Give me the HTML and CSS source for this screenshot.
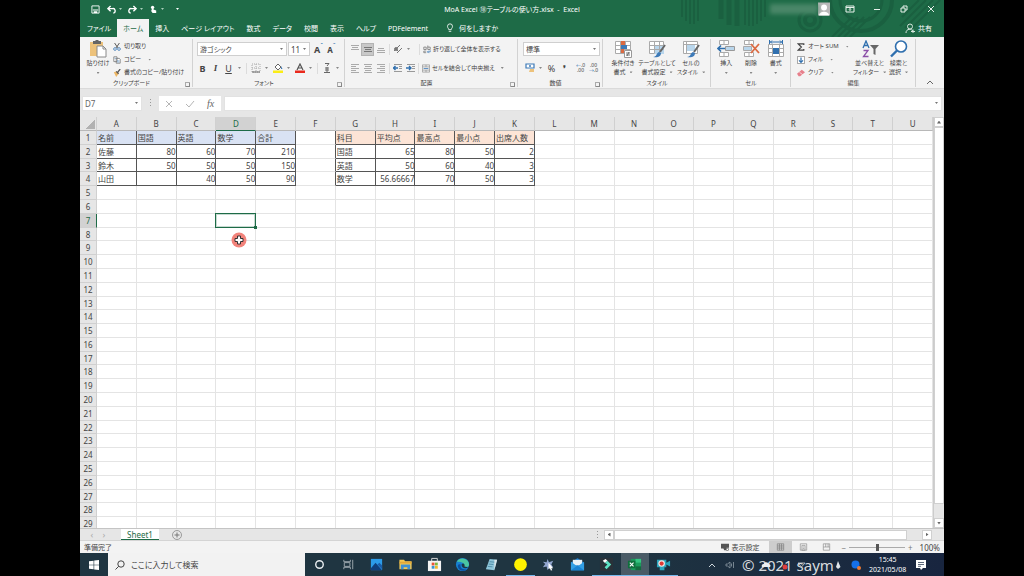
FILE: index.html
```html
<!DOCTYPE html>
<html lang="ja">
<head>
<meta charset="utf-8">
<title>MoA Excel ⑱テーブルの使い方.xlsx - Excel</title>
<link rel="stylesheet" href="styles.css">
</head>
<body>
<div class="window">
  <header class="top">
    <svg class="pattern" viewBox="0 0 300 37" preserveAspectRatio="xMaxYMin slice" fill="none" stroke="#1a6040" stroke-width="2" aria-hidden="true">
      <path d="M38 0V17M42 0V21M46 0V24M50 0V24M54 0V21M101 0V25M105 0V26M109 0V26M113 0V24M117 0V21M121 0V17"/>
      <path d="M77 0V19M85 0V25M93 0V26" stroke-width="5"/>
      <circle cx="166" cy="20" r="5" stroke-width="4"/><circle cx="166" cy="20" r="11" stroke-width="3"/>
      <path d="M188 37L208 17M194 37L214 17M200 37L220 17M206 37L226 17"/>
      <path d="M186 0a31 31 0 0 0 62 0" stroke-width="4"/><path d="M196 0a21 21 0 0 0 42 0" stroke-width="3"/>
      <path d="M256 26L282 0M261 28L289 0M266 30L296 0M258 17L275 0"/>
    </svg>
    <div class="titlebar">
      <div class="quick">
        <button aria-label="上書き保存"><svg viewBox="0 0 10 10"><path d="M1 1h8v8H1z" fill="none" stroke="#fff"/><path d="M2 5h6v1H2zM3 7h4v2H3z" fill="#fff"/></svg></button>
        <button aria-label="元に戻す"><svg viewBox="0 0 10 10"><path d="M4 1L1 4l3 3M1.500 4H6a2.500 2.500 0 0 1 1 5" fill="none" stroke="#fff" stroke-width="1.500"/></svg></button><i class="chev light"></i>
        <button aria-label="やり直し"><svg viewBox="0 0 10 10"><path d="M6 1l3 3-3 3M8.500 4H4a2.500 2.500 0 0 0-1 5" fill="none" stroke="#fff" stroke-width="1.500"/></svg></button><i class="chev light"></i>
        <button aria-label="タッチ/マウス モード"><svg viewBox="0 0 10 10"><circle cx="4" cy="2.500" r="1.800" fill="#fff"/><path d="M3 3h2v2l3 1v3H4L2 6h1z" fill="#fff"/></svg></button><i class="chev light"></i>
        <i class="chev light more"></i>
      </div>
      <div class="title">MoA Excel ⑱テーブルの使い方.xlsx &nbsp;-&nbsp; Excel</div>
      <div class="caption">
        <span class="account"></span>
        <svg class="avatar" viewBox="0 0 12 13"><path d="M0 0h12v13H0z" fill="#b9b9b9"/><circle cx="6" cy="5" r="3" fill="#fff"/><path d="M1 13c0-5 10-5 10 0z" fill="#fff"/></svg>
        <button aria-label="リボンの表示オプション"><svg viewBox="0 0 10 10"><path d="M1 2h8v6H1zM1 3.500h8M5 7V4.500M4 5.500l1-1 1 1" fill="none" stroke="#e7f1eb"/></svg></button>
        <button aria-label="最小化"><svg viewBox="0 0 10 10"><path d="M2 5.500h6" stroke="#e7f1eb"/></svg></button>
        <button aria-label="元に戻す (縮小)"><svg viewBox="0 0 10 10"><path d="M2 4h4v4H2zM4 4V2h4v4H6" fill="none" stroke="#e7f1eb"/></svg></button>
        <button aria-label="閉じる"><svg viewBox="0 0 10 10"><path d="M2 2l6 6M8 2L2 8" stroke="#e7f1eb"/></svg></button>
      </div>
    </div>
    <nav class="tabs">
      <button>ファイル</button><button class="active">ホーム</button><button>挿入</button><button>ページ レイアウト</button><button>数式</button><button>データ</button><button>校閲</button><button>表示</button><button>ヘルプ</button><button>PDFelement</button>
      <button class="tell"><svg viewBox="0 0 10 12"><path d="M3.500 8C3.500 6.500 2 6 2 4a3 3 0 0 1 6 0c0 2-1.500 2.500-1.500 4zM3.500 10h3" fill="none" stroke="#fff"/></svg>何をしますか</button>
      <button class="share"><svg viewBox="0 0 10 10"><circle cx="5" cy="3.500" r="2.500" fill="none" stroke="#d7e8de"/><path d="M1 10c0-5 6-4 7-2M6 8.500h4M8 6.500v4" fill="none" stroke="#d7e8de"/></svg>共有</button>
    </nav>
  </header>

  <section class="ribbon">
    <div class="group clipboard">
      <div class="body">
        <button class="big"><svg viewBox="0 0 18 18"><path d="M1 2h13v14H1z" fill="#edc27b"/><path d="M4 1h2l1-1h2l1 1h2v3H4z" fill="#666"/><path d="M8 6h6l3 3v8H8z" fill="#fff" stroke="#8a8a8a"/><path d="M14 6v3h3" fill="none" stroke="#8a8a8a"/></svg><span>貼り付け</span><i class="chev"></i></button>
        <div class="list">
          <button><svg viewBox="0 0 10 10"><path d="M2 0l4 6M8 0L4 6" stroke="#555" stroke-width="1.200"/><circle cx="2.500" cy="7.500" r="1.700" fill="none" stroke="#3d7ab8"/><circle cx="7.500" cy="7.500" r="1.700" fill="none" stroke="#3d7ab8"/></svg>切り取り</button>
          <button><svg viewBox="0 0 10 10"><path d="M1 1h4v6H1zM4 3h4l1 1v5H4z" fill="#fff" stroke="#777"/><path d="M5 6h3M5 7.500h3M2 3h2" stroke="#4a86c0" stroke-width=".7"/></svg>コピー<i class="chev"></i></button>
          <button><svg viewBox="0 0 10 10"><path d="M1 4l3-1 3 3-3 4z" fill="#edb765"/><path d="M4 3l3 3M6 4l3-4" stroke="#555" stroke-width="1.600"/></svg>書式のコピー/貼り付け</button>
        </div>
      </div>
      <div class="label">クリップボード</div><i class="launch"></i>
    </div>
    <div class="group font">
      <div class="rows">
        <div class="row">
          <label class="pick wide"><select aria-label="フォント"><option>游ゴシック</option></select></label>
          <label class="pick size"><select aria-label="フォント サイズ"><option>11</option></select></label>
          <button class="tool"><b>A</b><sup>ˆ</sup></button><button class="tool small"><b>A</b><sup>ˇ</sup></button>
        </div>
        <div class="row">
          <button class="tool"><b>B</b></button><button class="tool"><em>I</em></button><button class="tool"><u>U</u></button><i class="chev"></i>
          <i class="rule"></i>
          <button class="tool" aria-label="罫線"><svg viewBox="0 0 10 10"><path d="M1 1h8v8H1zM5 1v8M1 5h8" fill="none" stroke="#aaa" stroke-dasharray="1 1"/><path d="M1 9h8" stroke="#666"/></svg></button><i class="chev"></i>
          <button class="tool" aria-label="塗りつぶしの色"><svg viewBox="0 0 10 10"><path d="M2 4l3-3 3 3-3 3z" fill="#fff" stroke="#666"/><path d="M8 3l1.500 3H8z" fill="#3d7ab8"/><path d="M0 7.500h10V10H0z" fill="#fbed16"/></svg></button><i class="chev"></i>
          <button class="tool" aria-label="フォントの色"><svg viewBox="0 0 10 10"><path d="M2 7l3-6 3 6M3 5h4" fill="none" stroke="#555" stroke-width="1.200"/><path d="M0 7.500h10V10H0z" fill="#e9291c"/></svg></button><i class="chev"></i>
          <i class="rule"></i>
          <button class="tool" aria-label="ふりがな"><svg viewBox="0 0 10 10"><path d="M3 .5h4L5 3M3 5h4M5 4v5M3 7h4M2 9.500h6" fill="none" stroke="#666"/></svg></button><i class="chev"></i>
        </div>
      </div>
      <div class="label">フォント</div><i class="launch"></i>
    </div>
    <div class="group align">
      <div class="rows">
        <div class="row">
          <button class="tool" aria-label="上揃え"><svg viewBox="0 0 10 10"><path d="M1 1.500h8M2 3.500h6M1 5.500h8" stroke="#aaa"/></svg></button>
          <button class="tool on" aria-label="上下中央揃え"><svg viewBox="0 0 10 10"><path d="M1 3.500h8M2 5.500h6M1 7.500h8" stroke="#777"/></svg></button>
          <button class="tool" aria-label="下揃え"><svg viewBox="0 0 10 10"><path d="M2 4.500h6M1 6.500h8M1 8.500h8" stroke="#aaa"/></svg></button>
          <i class="rule"></i>
          <button class="tool" aria-label="方向"><svg viewBox="0 0 10 10"><path d="M1 7l6-6M4 9l5-5M2 4l3 3" stroke="#777"/><circle cx="3" cy="5" r="1.500" fill="none" stroke="#777"/></svg></button><i class="chev"></i>
          <i class="rule push"></i>
          <button class="text"><svg viewBox="0 0 10 10"><path d="M1 2h3v3H1zM6 0v5h3V2H6M4 7H1v2h3" fill="none" stroke="#777"/><path d="M9 6v2H6M7 6.500L5.500 8 7 9.500" fill="none" stroke="#3d7ab8"/></svg>折り返して全体を表示する</button>
        </div>
        <div class="row">
          <button class="tool" aria-label="左揃え"><svg viewBox="0 0 10 10"><path d="M1 1.500h8M1 3.500h5M1 5.500h8M1 7.500h5M1 9.500h8" stroke="#aaa"/></svg></button>
          <button class="tool" aria-label="中央揃え"><svg viewBox="0 0 10 10"><path d="M1 1.500h8M2 3.500h6M1 5.500h8M2 7.500h6M1 9.500h8" stroke="#aaa"/></svg></button>
          <button class="tool" aria-label="右揃え"><svg viewBox="0 0 10 10"><path d="M1 1.500h8M4 3.500h5M1 5.500h8M4 7.500h5M1 9.500h8" stroke="#aaa"/></svg></button>
          <i class="rule"></i>
          <button class="tool" aria-label="インデントを減らす"><svg viewBox="0 0 10 10"><path d="M1 1.500h8M6 3.500h3M6 5.500h3M1 8.500h8" stroke="#999"/><path d="M0 5h5M2.500 3L.5 5l2 2" fill="none" stroke="#2f6fae" stroke-width="1.400"/></svg></button>
          <button class="tool" aria-label="インデントを増やす"><svg viewBox="0 0 10 10"><path d="M1 1.500h8M6 3.500h3M6 5.500h3M1 8.500h8" stroke="#999"/><path d="M0 5h5M3 3l2 2-2 2" fill="none" stroke="#2f6fae" stroke-width="1.400"/></svg></button>
          <i class="rule tight"></i>
          <button class="text"><svg viewBox="0 0 10 10"><path d="M.5 .5h9v9h-9zM.5 3h9M.5 7h9M5 .5V3M5 7v2.500" fill="none" stroke="#888" stroke-width=".8"/><path d="M2 5h6" stroke="#3d7ab8"/></svg>セルを結合して中央揃え</button><i class="chev end"></i>
        </div>
      </div>
      <div class="label">配置</div><i class="launch"></i>
    </div>
    <div class="group number">
      <div class="rows">
        <div class="row"><label class="pick wide"><select aria-label="表示形式"><option>標準</option></select></label></div>
        <div class="row">
          <button class="tool" aria-label="通貨"><svg viewBox="0 0 10 10"><path d="M1 1h8v4H1z" fill="#fff" stroke="#3d7ab8" stroke-width="1.200"/><circle cx="5" cy="3" r="1" fill="#3d7ab8"/><path d="M5 6h4v3H4z" fill="#edc27b"/></svg></button><i class="chev"></i>
          <button class="tool">%</button><button class="tool"><b>❜</b></button>
          <i class="rule"></i>
          <button class="tool digits" aria-label="小数点以下の表示桁数を増やす"><span><s>←</s>.0</span><span>.00</span></button><button class="tool digits" aria-label="小数点以下の表示桁数を減らす"><span>.00</span><span><s>→</s>.0</span></button>
        </div>
      </div>
      <div class="label">数値</div><i class="launch"></i>
    </div>
    <div class="group styles">
      <div class="body">
        <button class="big"><svg viewBox="0 0 18 18"><path d="M1.500 1.500h15v12h-15zM1.500 5.500h15M1.500 9.500h15M6.500 1.500v12M11.500 1.500v12" fill="#fff" stroke="#aaa"/><path d="M7 1h4v4H7zM7 9h3v4H7z" fill="#dc6a41"/><path d="M7 5h6v4H7z" fill="#3d7ab8"/><path d="M10.500 10.500h7v7h-7z" fill="#fff" stroke="#999"/><path d="M12 13h4M12 15h4M15 12l-2 4" stroke="#555" stroke-width=".8"/></svg><span>条件付き<br>書式<i class="chev"></i></span></button>
        <button class="big"><svg viewBox="0 0 18 18"><path d="M1.500 1.500h14v12h-14z" fill="#fff" stroke="#aaa"/><path d="M6 5h10v9H6z" fill="#b9d6ec"/><path d="M1.500 5.500h14M1.500 9.500h14M6.500 1.500v12M11.500 1.500v12" stroke="#aaa"/><path d="M17 5l-5 7" stroke="#666" stroke-width="2"/><path d="M5 17c4 0 3-4 6-5l2 1c0 4-4 5-8 4z" fill="#3d7ab8"/></svg><span>テーブルとして<br>書式設定<i class="chev"></i></span></button>
        <button class="big"><svg viewBox="0 0 18 18"><path d="M1.500 1.500h14v12h-14z" fill="#fff" stroke="#aaa"/><path d="M4 4h9v7H4z" fill="#b9d6ec"/><path d="M1.500 4.500h14M4.500 1.500v12" stroke="#aaa"/><path d="M17 5l-5 7" stroke="#666" stroke-width="2"/><path d="M5 17c4 0 3-4 6-5l2 1c0 4-4 5-8 4z" fill="#3d7ab8"/></svg><span>セルの<br>スタイル<i class="chev"></i></span></button>
      </div>
      <div class="label">スタイル</div>
    </div>
    <div class="group cells">
      <div class="body">
        <button class="big"><svg viewBox="0 0 18 18"><path d="M2.500 .5h9v4h-9zM7 .5v4M2.500 12.500h9v4h-9zM7 12.500v4" fill="#fff" stroke="#aaa"/><path d="M8.500 6.500h9v4h-9z" fill="#b9d6ec" stroke="#999"/><path d="M1 8.500h7M4 5.500l-3 3 3 3" fill="none" stroke="#2f6fae" stroke-width="1.600"/></svg><span>挿入</span><i class="chev"></i></button>
        <button class="big"><svg viewBox="0 0 18 18"><path d="M2.500 .5h9v4h-9zM7 .5v4M2.500 12.500h9v4h-9zM7 12.500v4" fill="#fff" stroke="#aaa"/><path d="M1.500 6.500h8v4h-8z" fill="#b9d6ec" stroke="#aaa"/><path d="M9 4l8 9M17 4l-8 9" stroke="#dc6a41" stroke-width="1.800"/></svg><span>削除</span><i class="chev"></i></button>
        <button class="big"><svg viewBox="0 0 18 18"><path d="M1.500 4.500h15v12h-15zM1.500 8.500h15M1.500 12.500h15M5.500 4.500v12M12.500 4.500v12" fill="#fff" stroke="#aaa"/><path d="M6 8h6v6H6z" fill="#2f6fae"/><path d="M2.500 0v4M15.500 0v4M3 2h12M5 .5L3.500 2 5 3.500M13 .5L14.500 2 13 3.500" fill="none" stroke="#2f6fae"/></svg><span>書式</span><i class="chev"></i></button>
      </div>
      <div class="label">セル</div>
    </div>
    <div class="group edit">
      <div class="body">
        <div class="list">
          <button><svg viewBox="0 0 10 10"><path d="M8.500 2.500V1h-7l4 4-4 4h7V7.500" fill="none" stroke="#444" stroke-width="1.500"/></svg>オート SUM<i class="chev"></i></button>
          <button><svg viewBox="0 0 10 10"><path d="M.5 .5h9v9h-9z" fill="#fff" stroke="#888"/><path d="M5 2v6M2.500 5.500L5 8l2.500-2.500" fill="none" stroke="#2f6fae" stroke-width="1.500"/></svg>フィル<i class="chev"></i></button>
          <button><svg viewBox="0 0 10 10"><path d="M0 6l6-5 4 3-6 5H2z" fill="#e77f8b"/><path d="M3 4l4 3" stroke="#fff" stroke-width=".8"/></svg>クリア<i class="chev"></i></button>
        </div>
        <button class="big"><svg viewBox="0 0 18 18"><path d="M2 8l3-7 3 7M3 5.500h4" fill="none" stroke="#2f6fae" stroke-width="1.300"/><path d="M2.500 10.500H7l-4.500 6H7.500" fill="none" stroke="#8c50a8" stroke-width="1.300"/><path d="M9 5h9l-3.500 4v6l-2-1V9z" fill="#666"/></svg><span>並べ替えと<br>フィルター<i class="chev"></i></span></button>
        <button class="big"><svg viewBox="0 0 18 18"><circle cx="11" cy="6.500" r="5.500" fill="#fff" stroke="#2f6fae" stroke-width="1.600"/><path d="M7 10.500L1 16.500" stroke="#2f6fae" stroke-width="2.400"/></svg><span>検索と<br>選択<i class="chev"></i></span></button>
      </div>
      <div class="label">編集</div>
    </div>
    <div class="group collapse"><button aria-label="リボンを折りたたむ"><svg viewBox="0 0 10 10"><path d="M2 7l3-3 3 3" fill="none" stroke="#666"/></svg></button></div>
  </section>

  <section class="formula">
    <label class="pick name"><input aria-label="名前ボックス" value="D7"></label>
    <i class="dots"></i>
    <div class="fx"><button aria-label="キャンセル"><svg viewBox="0 0 10 10"><path d="M2 2l6 6M8 2L2 8" stroke="#b5b5b5"/></svg></button><button aria-label="入力"><svg viewBox="0 0 10 10"><path d="M1 5l3 3 5-6" fill="none" stroke="#b5b5b5"/></svg></button><button class="fn"><em>fx</em></button></div>
    <label class="pick bar"><input aria-label="数式バー"></label>
  </section>

  <main class="sheet">
    <div class="view"><table class="grid" id="grid"></table></div>
    <div class="vscroll"><button aria-label="上へ"><i class="arrow up"></i></button><i class="thumb"></i><i class="rest"></i><button aria-label="下へ"><i class="arrow down"></i></button></div>
    <svg class="cursor" viewBox="0 0 16 16" aria-hidden="true"><circle cx="8" cy="8" r="7.500" fill="#f2837b"/><path d="M6.500 4h3v2.500H12v3H9.500V12h-3V9.500H4v-3h2.500z" fill="#fff" stroke="#333"/></svg>
  </main>

  <div class="sheets">
    <div class="names"><button class="nav" aria-label="前のシート">‹</button><button class="nav" aria-label="次のシート">›</button><button class="current">Sheet1</button><button class="add" aria-label="新しいシート"><svg viewBox="0 0 10 10"><circle cx="5" cy="5" r="4.500" fill="none" stroke="#888" stroke-width=".8"/><path d="M5 2.500v5M2.500 5h5" stroke="#777"/></svg></button></div>
    <i class="dots"></i>
    <div class="hscroll"><button aria-label="左へ"><i class="arrow left"></i></button><i class="thumb"></i><i class="rest"></i><button aria-label="右へ"><i class="arrow right"></i></button></div>
  </div>

  <footer class="status">
    <span>準備完了</span>
    <div class="tools">
      <button class="display"><svg viewBox="0 0 10 10"><path d="M0 1h10v5H7v3H4L3 7H0z" fill="#555"/><circle cx="8" cy="8" r="1.500" fill="#fff" stroke="#555"/></svg>表示設定</button>
      <button class="mode on" aria-label="標準"><svg viewBox="0 0 10 10"><path d="M1 1h8v8H1zM1 3.700h8M1 6.300h8M3.700 1v8M6.300 1v8" fill="none" stroke="#777" stroke-width=".8"/></svg></button>
      <button class="mode" aria-label="ページ レイアウト"><svg viewBox="0 0 10 10"><path d="M1 1h8v8H1zM3 3h4v6H3zM4 5h2M4 7h2" fill="none" stroke="#888" stroke-width=".8"/></svg></button>
      <button class="mode" aria-label="改ページ プレビュー"><svg viewBox="0 0 10 10"><path d="M1 1h8v8H1zM1 5h8M4 1v4M7 1v4" fill="none" stroke="#888" stroke-width=".8"/></svg></button>
      <span class="sign">−</span><input class="zoom" type="range" min="10" max="190" value="100" aria-label="ズーム"><span class="sign">+</span><span class="percent">100%</span>
    </div>
  </footer>

  <div class="taskbar">
    <button class="start" aria-label="スタート"><svg viewBox="0 0 10 10"><path d="M0 1.300L4.600 .7v4H0zM5.200 .6L10 0v4.700H5.200zM0 5.300h4.600v4L0 8.700zM5.200 5.300H10V10l-4.800-.6z" fill="#fff"/></svg></button>
    <label class="search"><svg viewBox="0 0 10 10"><circle cx="6" cy="4" r="3.200" fill="none" stroke="#444"/><path d="M3.700 6.300L.5 9.500" stroke="#444"/></svg><input placeholder="ここに入力して検索" aria-label="検索"></label>
    <div class="apps">
      <button aria-label="Cortana"><svg viewBox="0 0 16 16"><circle cx="8" cy="8" r="4" fill="none" stroke="#e8edf0" stroke-width="1.500"/></svg></button>
      <button aria-label="タスク ビュー"><svg viewBox="0 0 16 16"><path d="M3 3v2h7V3M3 13v-2h7v2M3.500 6h6v4h-6zM12.500 3v10" fill="none" stroke="#9faab0"/></svg></button>
      <button aria-label="フォト"><svg viewBox="0 0 16 16"><path d="M2 2h12v12H2z" fill="#2c9be8"/><path d="M2 12l5-6 7 8H2z" fill="#103f7c"/><path d="M9 8l2-2 3 3v4z" fill="#1b5ca8"/></svg></button>
      <button aria-label="エクスプローラー"><svg viewBox="0 0 16 16"><path d="M1.500 3h5l1 1.500h7V13h-13z" fill="#f5c951"/><path d="M3 8h10v5h-3v-2H6v2H3z" fill="#3f91d3"/><path d="M1.500 5h13v2h-13z" fill="#e1a83a"/></svg></button>
      <button aria-label="Microsoft Store"><svg viewBox="0 0 16 16"><path d="M1 4h14v11H1z" fill="#f4f4f4"/><path d="M5 4.500v-3h6v3" fill="none" stroke="#ddd"/><path d="M5 6h3v3H5z" fill="#e85436"/><path d="M8.500 6h3v3h-3z" fill="#7eb83e"/><path d="M5 9.500h3v3H5z" fill="#3994d1"/><path d="M8.500 9.500h3v3h-3z" fill="#f0b52a"/></svg></button>
      <button aria-label="Edge"><svg viewBox="0 0 16 16"><circle cx="8" cy="8" r="7" fill="#1780d0"/><path d="M2 5a7 7 0 0 1 13 3c0 3-4 3-5 2 1-3-2-5-8-5z" fill="#4bc6a0"/><path d="M6 8c-1 4 3 6 7 5-3 3-9 2-10-3 0-2 1-3 3-2z" fill="#0c4f9c"/><path d="M7 8c1-2 4-1 3 2l4 1c-3 2-7 1-7-3z" fill="#1f3541"/></svg></button>
      <button aria-label="メモ帳"><svg viewBox="0 0 16 16"><path d="M6 2l8 1-3 11-9-1z" fill="#8fc6da"/><path d="M11 3l3 0-3 11z" fill="#d8e4e8"/><path d="M6 5l5 .5M5 7.500l5 .5M4 10l5 .5" stroke="#4e8ca6"/></svg></button>
      <button class="open" aria-label="レコーダー"><svg viewBox="0 0 16 16"><circle cx="8" cy="8" r="6.800" fill="#fff200"/></svg></button>
      <button aria-label="ポインター"><svg viewBox="0 0 16 16"><path d="M7 2l1.500 3.500L13 4l-2 4 2 3-4-1-2 4-1-4-4 1 2.500-3.500L2 5l4 .5z" fill="#92a6cf"/><path d="M8 6l5 6-2 0 1 2-1.500.5L9.500 12 8 13z" fill="#fff"/></svg></button>
      <button aria-label="メール"><svg viewBox="0 0 16 16"><path d="M1 6l7-5 7 5v8H1z" fill="#1475c4"/><path d="M3 3h10v6H3z" fill="#e9f1f7"/><path d="M1 5l7 5 7-5v9H1z" fill="#329fe5"/><path d="M1 14l7-5 7 5z" fill="#1b83d3"/></svg></button>
      <button class="open" aria-label="Filmora"><svg viewBox="0 0 16 16"><path d="M1 1h14v14H1z" fill="#293239"/><path d="M6 6l3-2 4 4-5 5-2-2 3-3z" fill="#5de2c4"/><path d="M4 4l3-2 2 2-3 2z" fill="#fff"/></svg></button>
      <button class="open on" aria-label="Excel"><svg viewBox="0 0 16 16"><path d="M4 2h11v12H4z" fill="#1b9b5b"/><path d="M9 2h6v4H9z" fill="#35c481"/><path d="M9 10h6v4H9z" fill="#136b3e"/><path d="M1 4h8v8H1z" fill="#0f6f3c"/><path d="M3 6l4 4M7 6l-4 4" stroke="#fff" stroke-width="1.200"/></svg></button>
      <button class="open" aria-label="画面録画"><svg viewBox="0 0 16 16"><path d="M1 3h10v8H1zM11 6l4-2v6l-4-2zM4 11h5v3H4z" fill="#2ba6bd"/><circle cx="6" cy="7" r="3.500" fill="#f3e6e4"/><circle cx="6" cy="7" r="2.200" fill="#df3a35"/></svg></button>
    </div>
    <div class="tray">
      <svg viewBox="0 0 10 10"><path d="M2 7l3-3 3 3" fill="none" stroke="#cfd8de"/></svg>
      <svg viewBox="0 0 10 10"><path d="M1 4h1.500L5 2v6L2.500 6H1zM6.500 3.500v3M8.500 2v6" fill="none" stroke="#8d9ba5" stroke-width=".8"/></svg>
      <svg viewBox="0 0 10 10"></svg>
      <svg viewBox="0 0 10 10"><path d="M1 7a2 2 0 0 1 1.500-3A3 3 0 0 1 8 4a2 2 0 0 1 1 3z" fill="#e9eef2"/></svg>
      <svg viewBox="0 0 10 10"><circle cx="6" cy="7" r="2.500" fill="#e03e3e"/></svg>
      <svg viewBox="0 0 10 10"><path d="M1 3h7l-3.500 4z" fill="none" stroke="#aab6bf"/></svg>
      <svg viewBox="0 0 10 10"></svg>
      <svg viewBox="0 0 10 10"><path d="M5 1l2.500 6-2.500 2-2-2zM5 3v3" fill="#e1e6ea"/></svg>
      <svg viewBox="0 0 10 10"><circle cx="4.500" cy="4.500" r="4" fill="#1670e8"/><circle cx="8" cy="8" r="2" fill="#ef7b32"/></svg>
      <div class="clock"><span>15:45</span><span>2021/05/08</span></div>
      <svg class="notice" viewBox="0 0 10 10"><path d="M0 0h10v8H7L5 10 4 8H0z" fill="#fff"/><path d="M2 2.500h6M2 4.500h6M2 6.300h3" stroke="#33445c" stroke-width=".8"/></svg>
      <span class="mark">© 2021 saym</span>
    </div>
  </div>
</div>
<script src="grid.js"></script>
</body>
</html>
```
FILE: styles.css
```css
* { box-sizing: border-box; }
body {
  margin: 0;
  padding: 0 80px;
  background: #000;
  color: #444;
  font: 7px/9px "Noto Sans", "Noto Sans CJK JP", sans-serif;
  font-feature-settings: "palt";
}
button, input, select {
  font: inherit;
  color: inherit;
  font-feature-settings: inherit;
  margin: 0;
  padding: 0;
  border: 0;
  background: none;
  min-width: 0;
  outline: 0;
}
button { display: flex; align-items: center; justify-content: center; white-space: nowrap; }
svg { display: block; flex: none; width: 10px; height: 10px; }
.window { display: flex; flex-direction: column; height: 100vh; background: #e6e6e6; }

/* small drop-down marks */
.chev { display: inline-block; flex: none; width: 3px; height: 2px; margin: 0 4px; background: #888; clip-path: polygon(0 0, 100% 0, 50% 100%); vertical-align: middle; }
.chev.light { background: #a8cdb9; margin: 0 3px; }
.chev.more { margin-left: 9px; background: #fff; }
.rule { flex: none; width: 1px; height: 11px; margin: 0 4px; background: #dcdcdc; }

/* title and tabs */
.top { position: relative; background: #1e6b47; color: #fff; flex: none; }
.pattern { position: absolute; top: 0; right: 0; width: 300px; height: 100%; }
.titlebar, .tabs { position: relative; display: flex; }
.titlebar { display: grid; grid-template-columns: 1fr auto 1fr; align-items: center; height: 18px; }
.quick { display: flex; align-items: center; padding-left: 11px; }
.quick button:first-child { margin-right: 7px; }
.quick svg { width: 9px; height: 9px; }
.quick button + .chev + button { margin-left: 3px; }
.caption { display: flex; align-items: center; justify-content: flex-end; }
.caption button { width: 27px; height: 18px; }
.caption .avatar { width: 12px; height: 14px; margin-right: 6px; }
.account { width: 48px; height: 10px; background: #4a8768; filter: blur(2px); }
.tabs { height: 19px; padding-left: 1px; }
.tabs button { padding: 0 6px; margin-top: 1px; }
.tabs .active { background: #f3f3f3; color: #1e6b47; }
.tabs .tell { margin-left: 5px; gap: 4px; }
.tabs .share { margin-left: auto; gap: 3px; padding-right: 12px; }

/* ribbon */
.ribbon { display: flex; flex: none; height: 52px; background: #f3f3f3; border-bottom: 1px solid #dadada; font-size: 6px; }
.group { position: relative; display: flex; flex-direction: column; justify-content: space-between; padding: 3px 3px 0; min-width: 0; }
.group::after { content: ""; position: absolute; right: 0; top: 2px; bottom: 1px; width: 1px; background: #d2d2d2; }
.clipboard { flex: 113 1 113px; }
.font { flex: 152 1 152px; }
.align { flex: 173 1 173px; }
.number { flex: 85 1 85px; }
.styles { flex: 108 1 108px; }
.cells { flex: 80 1 80px; }
.edit { flex: 125 1 125px; }
.collapse { flex: 28 1 28px; justify-content: flex-end; align-items: center; padding-bottom: 1px; }
.collapse::after { display: none; }
.label { text-align: center; padding-right: 10px; }
.styles .label, .cells .label, .edit .label { padding: 0; }
.launch { position: absolute; right: 3px; bottom: 1px; width: 5px; height: 5px; border: solid #aaa; border-width: 1px 0 0 1px; }
.launch::after { content: ""; position: absolute; right: 0; bottom: 0; width: 3px; height: 3px; border: solid #888; border-width: 0 1px 1px 0; }
.body { display: flex; }
.big { flex-direction: column; justify-content: flex-start; line-height: 9px; }
.big svg { width: 18px; height: 18px; margin-bottom: 1px; }
.big .chev { margin: 4px 0 0; }
.big span .chev { margin: 0 0 0 4px; }
.list { display: flex; flex-direction: column; }
.list button { height: 13px; gap: 3px; justify-content: flex-start; }
.list svg { width: 8px; height: 8px; }
.clipboard .big { width: 30px; }
.styles .body > *, .cells .body > * { flex: 1 1 0; }
.edit .list { flex: 61 1 61px; padding-left: 3px; }
.edit .big { flex: 29 1 29px; }
.rows { display: flex; flex-direction: column; gap: 5px; padding-top: 2px; }
.row { display: flex; align-items: center; height: 14px; }
.tool { flex: none; width: 13px; height: 13px; font-size: 9px; }
.tool b { font-weight: 700; }
.tool em { font-family: "Liberation Serif", serif; font-weight: 700; }
.tool sup { font-size: 7px; line-height: 6px; color: #2f6fae; align-self: flex-start; }
.tool.small { font-size: 8px; }
.tool.on { background: #c8c8c8; box-shadow: inset 0 0 0 1px #b3b3b3; }
.tool svg { width: 10px; height: 10px; }
.row .chev { margin: 0 3px; }
.align .rule { margin: 0 1px 0 2px; }
.align .rule.push { margin: 0 3px 0 6px; }
.align .rule.tight { margin: 0 3px 0 1px; }
.align .chev.end { margin-left: 6px; }
.font .rule { margin: 0 2px; }
.number .row { padding-left: 2px; }
.number .rule { margin: 0 1px; background: none; }
.text { gap: 2px; }
.text svg { width: 8px; height: 9px; }
.digits { flex-direction: column; font-size: 5px; line-height: 5px; }
.digits s { color: #2f6fae; text-decoration: none; }
.pick { position: relative; display: flex; height: 14px; background: #fff; border: 1px solid #cfcfcf; }
.pick select, .pick input { appearance: none; width: 100%; padding-left: 2px; }
.pick::after { content: ""; position: absolute; right: 3px; top: 5px; width: 3px; height: 2px; background: #777; clip-path: polygon(0 0, 100% 0, 50% 100%); }
.pick.wide { flex: 1; font-size: 7px; }
.font .pick.wide { margin: 0 1px; }
.pick.size { width: 22px; margin-right: 2px; font-size: 8px; }
.font .row:first-child { padding-right: 4px; }

/* formula bar */
.formula { display: flex; flex: none; height: 28px; padding: 7px 2px 6px; color: #666; }
.formula .pick { border-color: #e2e2e2; height: 15px; }
.pick.name { width: 60px; font-size: 8px; }
.dots { flex: none; width: 1px; height: 9px; background: repeating-linear-gradient(#999 0 1px, transparent 1px 3px); }
.formula .dots { margin: 3px 8px; }
.fx { display: flex; width: 62px; height: 15px; margin-right: 3px; background: #fff; }
.fx button { flex: 1; }
.fn em { font: italic 10px "Liberation Serif", serif; }
.pick.bar { flex: 1; }

/* worksheet */
.sheet { position: relative; display: flex; flex: 1; min-height: 0; }
.view { display: flex; flex: 1; min-width: 0; overflow: hidden; }
.grid { display: flex; flex-direction: column; flex: 1; min-width: 0; margin-bottom: -3px; font-size: 8px; font-feature-settings: normal; background: #fff; }
.grid thead { display: block; flex: none; height: 14px; }
.grid tbody { display: grid; flex: 1; min-height: 0; grid-auto-rows: minmax(0, 1fr); }
.grid tr { display: grid; grid-template-columns: 17px repeat(21, minmax(0, 1fr)); min-height: 0; height: 100%; }
.grid th, .grid td { display: block; min-width: 0; min-height: 0; padding: 0 1px; line-height: 13px; white-space: nowrap; border: solid #e4e4e4; border-width: 0 1px 1px 0; }
.grid th { padding: 0; background: #e6e6e6; font-weight: 400; text-align: center; border-color: #d0d0d0; }
.grid thead th { border-bottom-color: #b8b8b8; }
.grid thead th:first-child { background: linear-gradient(135deg, transparent 55%, #b2b2b2 55%) content-box, #e6e6e6; padding: 2px 1px 1px 4px; }
.grid th.here { background: #d2d2d2; color: #1e6b47; }
.grid thead th.here { border-bottom-color: #1e6b47; }
.grid tbody th.here { border-right-color: #1e6b47; }
.grid .edge { border-right-color: #555; }
.grid .line { border-color: #555; }
.grid .num { text-align: right; padding: 0; }
.grid .blue { background: #d9e2f3; }
.grid .peach { background: #fce4d6; }
.grid .selected { position: relative; }
.selected::before { content: ""; position: absolute; inset: -1px; border: 1px solid #1e6b47; outline: 1px solid #1e6b4740; outline-offset: -2px; }
.selected::after { content: ""; position: absolute; right: -2px; bottom: -2px; width: 3px; height: 3px; background: #1e6b47; }
.cursor { position: absolute; left: 151px; top: 115px; width: 16px; height: 16px; }
.vscroll { display: flex; flex-direction: column; width: 11px; border-left: 1px solid #ccc; }
.vscroll button, .hscroll button { flex: none; width: 10px; height: 10px; background: #fff; border: 1px solid #d0d0d0; }
.thumb { background: #fff; border: 1px solid #d0d0d0; }
.vscroll .thumb { flex: 378; }
.vscroll .rest { flex: 14; }
.arrow { width: 4px; height: 3px; background: #666; }
.up { clip-path: polygon(50% 0, 100% 100%, 0 100%); }
.down { clip-path: polygon(0 0, 100% 0, 50% 100%); }
.left, .right { width: 3px; height: 4px; }
.left { clip-path: polygon(100% 0, 100% 100%, 0 50%); }
.right { clip-path: polygon(0 0, 100% 50%, 0 100%); }

/* sheet tabs */
.sheets { display: flex; flex: none; height: 13px; border-top: 1px solid #c4c4c4; border-bottom: 1px solid #d4d4d4; }
.names { display: flex; flex: 517 1 517px; padding-left: 6px; }
.nav { width: 12px; color: #aaa; font-size: 9px; }
.current { width: 38px; height: 11px; margin-left: 11px; background: #fff; color: #1e6b47; font-size: 8px; border-bottom: 1px solid #1e6b47; }
.add { margin-left: 13px; }
.sheets .dots { margin: 2px 0; }
.hscroll { display: flex; flex: 334 1 334px; align-items: center; margin-right: 12px; padding-left: 6px; }
.hscroll .thumb { flex: 295; height: 10px; }
.hscroll .rest { flex: 15; }

/* status bar */
.status { display: flex; flex: none; align-items: center; justify-content: space-between; height: 12px; padding: 0 4px; background: #f3f3f3; }
.tools { display: flex; align-items: center; }
.display { gap: 2px; margin-right: 10px; }
.display svg { width: 8px; height: 8px; }
.mode { width: 23px; height: 12px; }
.mode.on { background: #cdcdcd; }
.mode svg { width: 9px; height: 8px; }
.sign { margin: 0 3px; font-size: 8px; color: #777; }
.zoom { appearance: none; width: 56px; height: 8px; background: linear-gradient(#aaa, #aaa) center / 100% 1px no-repeat; }
.zoom::-webkit-slider-thumb { appearance: none; width: 3px; height: 7px; background: #555; }
.zoom + .sign { margin: 0 7px 0 3px; }
.percent { font-size: 8px; }

/* taskbar */
.taskbar { display: flex; flex: none; height: 23px; background: linear-gradient(90deg, #1f3541 60%, #18253f); color: #fff; }
.start { flex: 28 1 28px; }
.search { display: flex; flex: 197 1 197px; align-items: center; gap: 6px; padding-left: 7px; background: #f2f2f2; color: #444; }
.search input { flex: 1; font-size: 8px; }
.search input::placeholder { color: #444; opacity: 1; }
.apps { display: flex; flex: 373 1 373px; }
.apps button { flex: 1; border-bottom: 1px solid transparent; }
.apps svg { width: 15px; height: 15px; }
.apps .open { border-color: #76b9ed; }
.apps .on { background: #4a5b66; }
.tray { position: relative; display: flex; flex: 266 1 266px; align-items: center; padding-left: 25px; }
.tray > svg { margin: 0 4px; width: 10px; }
.tray > .notice { margin: 0 0 0 10px; }
.clock { display: flex; flex-direction: column; align-items: center; margin-left: 4px; line-height: 10px; }
.mark { position: absolute; left: 64px; top: 2px; font-size: 15px; line-height: 20px; color: #f0f2f4e6; white-space: nowrap; }
```
FILE: grid.js
```js
const columns = [..."ABCDEFGHIJKLMNOPQRSTU"];
const rowCount = 29;
const blocks = [
  { start: 0, head: "blue", rows: [
    ["名前", "国語", "英語", "数学", "合計"],
    ["佐藤", 80, 60, 70, 210],
    ["鈴木", 50, 50, 50, 150],
    ["山田", "", 40, 50, 90]
  ] },
  { start: 6, head: "peach", rows: [
    ["科目", "平均点", "最高点", "最小点", "出席人数"],
    ["国語", 65, 80, 50, 2],
    ["英語", 50, 60, 40, 3],
    ["数学", 56.66667, 70, 50, 3]
  ] }
];
const active = { column: 3, row: 6 };

const grid = document.getElementById("grid");
const head = grid.createTHead().insertRow();
const body = grid.createTBody();

function addHeader(row, text, here) {
  const th = document.createElement("th");
  th.textContent = text;
  if (here) th.className = "here";
  row.append(th);
}

addHeader(head, "", false);
columns.forEach((name, c) => addHeader(head, name, c === active.column));

for (let r = 0; r < rowCount; r++) {
  const row = body.insertRow();
  addHeader(row, r + 1, r === active.row);
  columns.forEach((name, c) => {
    const cell = row.insertCell();
    if (c === active.column && r === active.row) cell.classList.add("selected");
    for (const block of blocks) {
      const values = block.rows[r];
      if (!values) continue;
      if (c === block.start - 1) cell.classList.add("edge");
      const value = values[c - block.start];
      if (value === undefined) continue;
      cell.textContent = value;
      cell.classList.add("line");
      if (r === 0) cell.classList.add(block.head);
      if (typeof value === "number") cell.classList.add("num");
    }
  });
}
```
